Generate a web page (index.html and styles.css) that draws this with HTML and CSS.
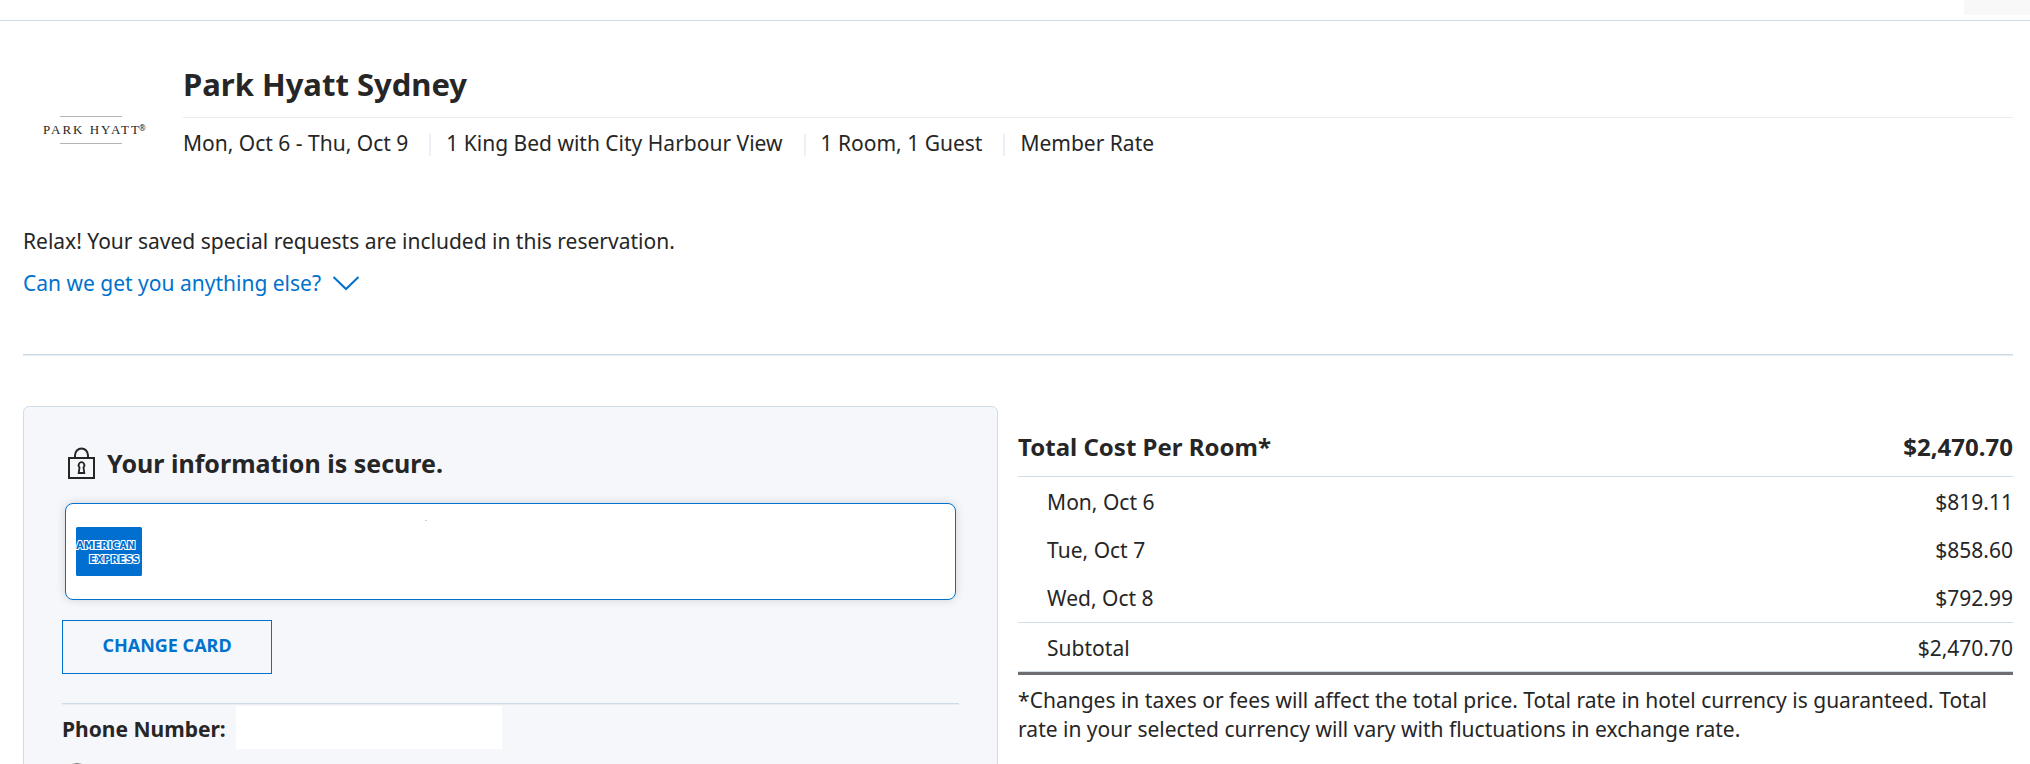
FILE: index.html
```html
<!DOCTYPE html>
<html lang="en">
<head>
    <meta charset="UTF-8">
    <title>Park Hyatt Sydney</title>
    <link rel="stylesheet" href="styles.css">
</head>
<body>
<header class="topbar">
    <div class="topbar-box"></div>
</header>

<main class="page">
    <section class="hotel">
        <svg class="hotel-logo" viewBox="0 0 110 36" role="img" aria-label="Park Hyatt">
            <path d="M20 4.500h62M20 31.500h62" stroke="#b4b4b4" stroke-width="1"/>
            <text class="logo-text" x="3" y="22">PARK HYATT</text>
            <text class="logo-mark" x="99" y="19">®</text>
        </svg>
        <div class="hotel-info">
            <h1>Park Hyatt Sydney</h1>
            <ul class="details">
                <li>Mon, Oct 6 - Thu, Oct 9</li>
                <li>1 King Bed with City Harbour View</li>
                <li>1 Room, 1 Guest</li>
                <li>Member Rate</li>
            </ul>
        </div>
    </section>

    <section class="requests">
        <p>Relax! Your saved special requests are included in this reservation.</p>
        <a href="#requests" class="more">Can we get you anything else?
            <svg class="chevron" viewBox="0 0 28 16"><path d="M1.500 2L14 14L26.500 2" fill="none" stroke="#0072ce" stroke-width="2"/></svg>
        </a>
    </section>
    <hr>

    <div class="columns">
        <section class="payment">
            <h2 class="secure">
                <svg class="lock" viewBox="0 0 28 32" fill="none" stroke="#262626" stroke-width="2">
                    <path d="M1 11h25v20h-25z"/>
                    <path d="M7 11V8.500a6.500 7 0 0 1 13 0V11"/>
                    <path d="M11.500 20.500a2.800 3.200 0 1 1 4 0l.800 5.500h-5.600z" stroke-width="1.800"/>
                </svg>
                Your information is secure.
            </h2>
            <div class="card">
                <svg class="amex" viewBox="0 0 66 49" role="img" aria-label="American Express">
                    <rect width="66" height="49" rx="1.500" fill="#006fcf"/>
                    <text x="0" y="22">AMERICAN</text>
                    <text x="13" y="36">EXPRESS</text>
                </svg>
                <span class="card-mark"></span>
            </div>
            <button type="button" class="change">CHANGE CARD</button>
            <hr>
            <div class="phone">
                <label for="phone">Phone Number:</label>
                <input type="tel" id="phone">
            </div>
            <input type="radio" class="option" aria-label="Phone">
        </section>

        <section class="cost">
            <table>
                <thead>
                <tr><th>Total Cost Per Room*</th><th>$2,470.70</th></tr>
                </thead>
                <tbody>
                <tr><td>Mon, Oct 6</td><td>$819.11</td></tr>
                <tr><td>Tue, Oct 7</td><td>$858.60</td></tr>
                <tr><td>Wed, Oct 8</td><td>$792.99</td></tr>
                </tbody>
                <tfoot>
                <tr><td>Subtotal</td><td>$2,470.70</td></tr>
                </tfoot>
            </table>
            <p class="note">*Changes in taxes or fees will affect the total price. Total rate in hotel currency is guaranteed. Total rate in your selected currency will vary with fluctuations in exchange rate.</p>
        </section>
    </div>
</main>
</body>
</html>
```
FILE: styles.css
```css
* {
    box-sizing: border-box;
    margin: 0;
    padding: 0;
}

html {
    overflow: hidden;
}

body {
    font-family: 'Noto Sans', sans-serif;
    font-size: 21px;
    line-height: 30px;
    color: #262626;
    background-color: #fff;
}

hr {
    height: 2px;
    border: none;
    border-top: 1px solid #cddbe5;
    border-bottom: 1px solid #e9edf1;
}

.topbar {
    height: 21px;
    border-bottom: 1px solid #cddeea;
}

.topbar-box {
    width: 66px;
    height: 15px;
    margin-left: auto;
    background-color: #f8f8f8;
}

.page {
    padding: 40px 17px 0 23px;
}

.hotel {
    display: flex;
    align-items: flex-end;
    gap: 33px;
}

.hotel-logo {
    width: 110px;
    height: 36px;
    margin: 0 0 10px 17px;
}

.logo-text {
    font-family: 'Liberation Serif', serif;
    font-size: 13px;
    letter-spacing: 2px;
    fill: #262626;
}

.logo-mark {
    font-size: 8px;
    fill: #262626;
}

.hotel-info {
    flex: 1;
}

h1 {
    font-size: 31px;
    line-height: 46px;
    padding-bottom: 10px;
    border-bottom: 1px solid #ebebed;
}

.details {
    display: flex;
    list-style: none;
    padding-top: 10px;
}

.details li {
    display: flex;
    align-items: flex-end;
}

.details li + li::before {
    content: "";
    width: 2px;
    height: 22px;
    margin: 0 15px 2px 21px;
    background-color: #ebf1f6;
}

.requests {
    margin: 68px 0 56px;
}

.more {
    display: flex;
    align-items: center;
    gap: 11px;
    margin-top: 12px;
    color: #0072ce;
    text-decoration: none;
}

.chevron {
    width: 28px;
    height: 16px;
}

.columns {
    display: grid;
    grid-template-columns: 49% 1fr;
    gap: 20px;
    margin-top: 50px;
}

.payment {
    padding: 39px 38px;
    border: 1px solid #cddeea;
    border-radius: 6px;
    background-color: #f6f7fb;
}

.secure {
    display: flex;
    align-items: center;
    gap: 11px;
    font-size: 25px;
    line-height: 34px;
    padding-left: 6px;
}

.lock {
    width: 28px;
    height: 32px;
}

.card {
    display: flex;
    align-items: center;
    height: 97px;
    margin: 23px 3px 20px;
    padding-left: 10px;
    border: 1px solid #0072ce;
    border-radius: 8px;
    background-color: #fff;
    box-shadow: 0 0 10px rgba(0, 0, 0, 0.15);
}

.amex {
    width: 66px;
    height: 49px;
}

.amex text {
    font-family: 'DejaVu Sans', sans-serif;
    font-size: 10px;
    font-weight: bold;
    fill: #006fcf;
    stroke: #fff;
    stroke-width: 2;
    paint-order: stroke;
}

.card-mark {
    align-self: flex-start;
    width: 2px;
    height: 1px;
    margin: 16px 0 0 283px;
    background-color: #ccc;
}

.change {
    display: block;
    width: 210px;
    height: 54px;
    padding-bottom: 4px;
    border: 1px solid #0072ce;
    background: none;
    color: #0072ce;
    font-family: inherit;
    font-size: 18px;
    font-weight: bold;
    cursor: pointer;
    margin-bottom: 29px;
}

.phone {
    display: flex;
    align-items: center;
    gap: 10px;
    margin-top: 1px;
    font-weight: bold;
}

.phone label {
    padding-top: 2px;
}

.phone input {
    width: 266px;
    height: 43px;
    border: none;
    background-color: #fff;
    font-size: 21px;
}

.option {
    display: block;
    width: 26px;
    height: 26px;
    margin: 14px 0 0 2px;
}

.cost {
    padding-top: 18px;
}

table {
    width: 100%;
    border-spacing: 0;
    border-bottom: 3px solid #6d6e71;
}

th {
    font-size: 24px;
    line-height: 36px;
    padding: 5px 0 11px;
    text-align: left;
    border-bottom: 1px solid #cddeea;
}

td {
    padding: 9px 0;
}

td:first-child {
    padding-left: 29px;
}

th:last-child,
td:last-child {
    text-align: right;
}

tbody tr:first-child td {
    padding-top: 10px;
}

tfoot td {
    padding-top: 10px;
    padding-bottom: 8px;
    border-top: 1px solid #cddeea;
    border-bottom: 1px solid #cddeea;
}

.note {
    padding-top: 11px;
    line-height: 29px;
}
```
